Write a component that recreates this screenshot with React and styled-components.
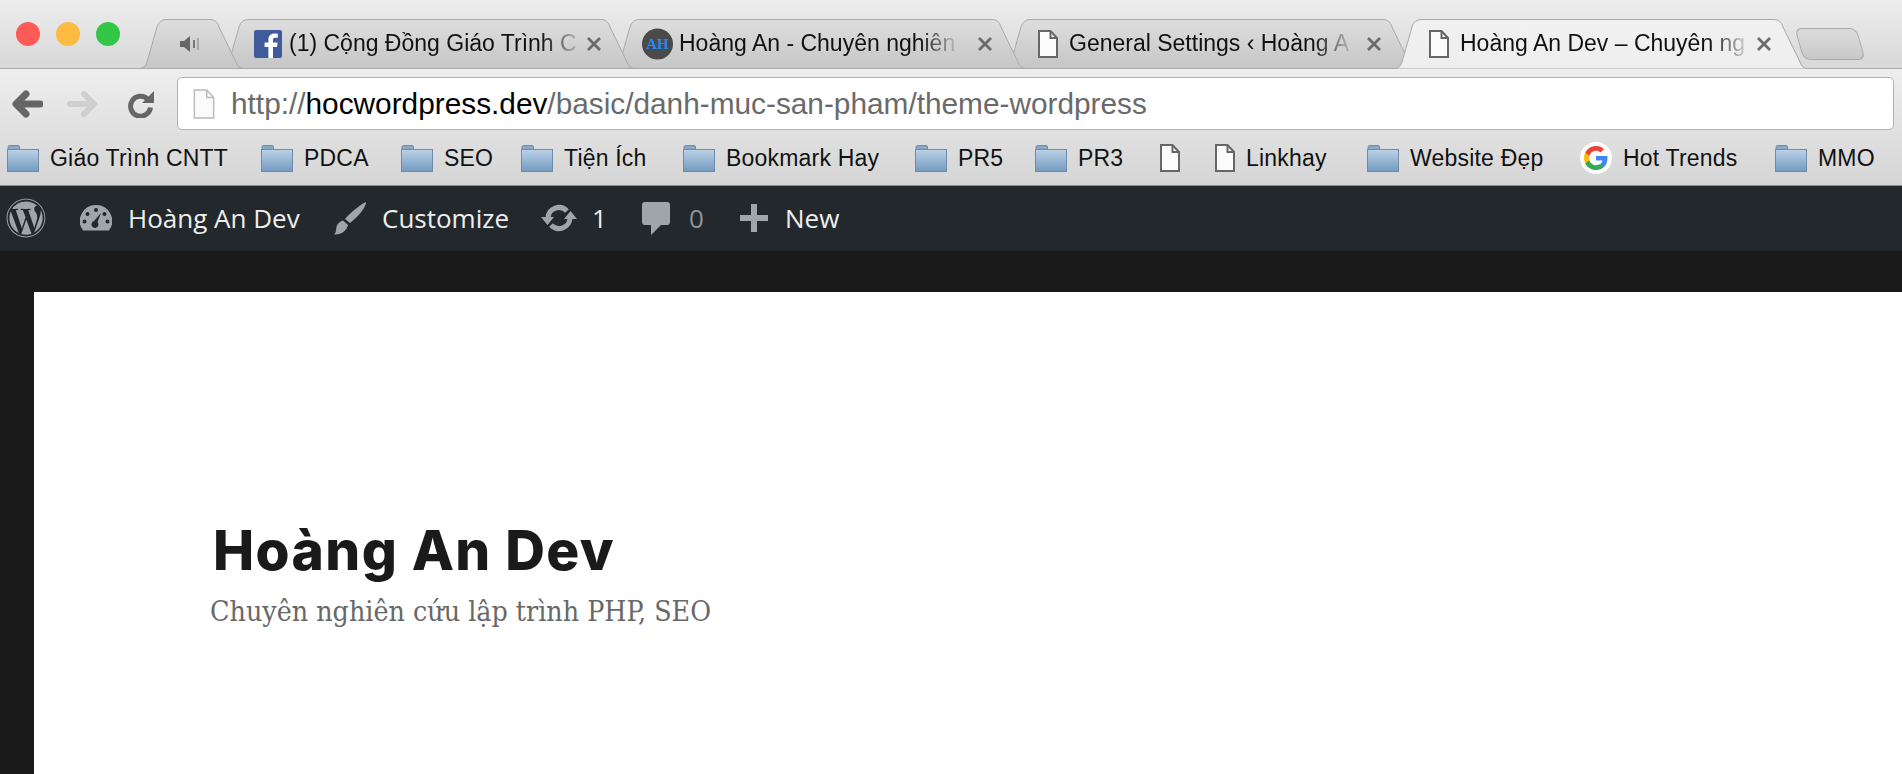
import React from 'react';
import styled, { createGlobalStyle } from 'styled-components';
import { FaWordpress } from 'react-icons/fa';

const GlobalStyle = createGlobalStyle`
  html, body {
    margin: 0;
    height: 100%;
    overflow: hidden;
    background: #1a1a1a;
  }
  #root {
    height: 100%;
  }
`;

const chromeFont = '"Liberation Sans", Arial, sans-serif';

const Page = styled.div`
  display: flex;
  flex-direction: column;
  height: 100%;
`;

const TabStrip = styled.div`
  display: flex;
  align-items: flex-end;
  height: 68px;
  padding-left: 16px;
  background: linear-gradient(#ededed, #d8d8d8);
  border-bottom: 1px solid #a9a9a9;
`;

const Lights = styled.div`
  display: flex;
  gap: 16px;
  align-self: flex-start;
  margin: 22px 19px 0 0;
`;

const Light = styled.span`
  width: 24px;
  height: 24px;
  border-radius: 50%;
  background: ${p => p.$color};
`;

const TabBox = styled.div`
  position: relative;
  z-index: ${p => p.$z};
  display: flex;
  align-items: center;
  flex: none;
  box-sizing: border-box;
  width: ${p => p.$width}px;
  height: 50px;
  margin-bottom: -1px;
  margin-left: ${p => (p.$first ? 0 : -23)}px;
  padding: 0 ${p => p.$right}px 1px ${p => p.$left}px;
  font: 23px ${chromeFont};
  color: #111;
`;

const TabShape = styled.svg`
  position: absolute;
  top: 0;
  left: 0;
  z-index: -1;
`;

const TabIcon = styled.span`
  display: flex;
  flex: none;
  margin-right: ${p => p.$gap}px;
`;

const TabTitle = styled.span`
  white-space: nowrap;
  -webkit-mask-image: linear-gradient(to right, #000 calc(100% - 36px), rgba(0, 0, 0, 0.15) 100%);
  mask-image: linear-gradient(to right, #000 calc(100% - 36px), rgba(0, 0, 0, 0.15) 100%);
`;

const CloseMark = styled.svg`
  flex: none;
  margin-left: auto;
`;

const NewTab = styled.div`
  flex: none;
  width: 62px;
  height: 32px;
  margin: 0 0 8px -9px;
  border: 1px solid #a9a9a9;
  border-radius: 7px;
  box-sizing: border-box;
  background: linear-gradient(#dcdcdc, #c8c8c8);
  transform: skewX(16deg);
`;

const Chrome = styled.div`
  background: linear-gradient(#eeeeee, #d5d5d5);
  border-bottom: 1px solid #8b8b8b;
`;

const Toolbar = styled.div`
  display: flex;
  align-items: center;
  box-sizing: border-box;
  height: 61px;
  padding: 8px 8px 0 11px;
`;

const NavIcon = styled.svg`
  flex: none;
  margin-right: ${p => p.$after}px;
`;

const Address = styled.div`
  flex: 1;
  display: flex;
  align-items: center;
  box-sizing: border-box;
  height: 53px;
  padding-left: 15px;
  background: #fff;
  border: 1px solid #b2b2b2;
  border-radius: 5px;
`;

const Url = styled.div`
  margin-left: 16px;
  font: 29.8px ${chromeFont};
  color: #6a6a6a;
  white-space: nowrap;
`;

const UrlHost = styled.span`
  color: #000;
`;

const Bookmarks = styled.div`
  display: flex;
  align-items: center;
  box-sizing: border-box;
  height: 55px;
  padding: 1px 0 0 7px;
`;

const Bookmark = styled.div`
  display: flex;
  align-items: center;
  flex: none;
  gap: 11px;
  width: ${p => p.$width}px;
  font: 23px ${chromeFont};
  letter-spacing: 0.2px;
  color: #111;
  white-space: nowrap;
`;

const AdminBar = styled.div`
  display: flex;
  align-items: center;
  flex: none;
  box-sizing: border-box;
  height: 65px;
  padding-bottom: 1px;
  background: #23282d;
  font: 26px "Open Sans", sans-serif;
  color: #eeeeee;
`;

const AdminItem = styled.div`
  display: flex;
  align-items: center;
  flex: none;
  width: ${p => p.$width}px;
  gap: ${p => p.$gap}px;
  color: ${p => p.$color || 'inherit'};
`;

const Main = styled.main`
  flex: 1;
  display: flex;
  padding: 41px 0 0 34px;
  background: #1a1a1a;
  min-height: 0;
`;

const Sheet = styled.div`
  flex: 1;
  background: #fff;
  padding: 225px 0 0 179px;
`;

const SiteTitle = styled.h1`
  margin: 0;
  font: 800 55px/66px Inter, sans-serif;
  letter-spacing: 1.4px;
  color: #1a1a1a;
`;

const Tagline = styled.p`
  margin: 10px 0 0 -3px;
  font: 28.3px/38px "DejaVu Serif", serif;
  font-stretch: condensed;
  color: #686868;
`;

const Gauge = styled.svg`
  flex: none;
`;

const tabPath = (w, closed) =>
  `M0.5 49.5 Q6 49.5 8 43 L18 8 Q20 0.5 28 0.5 H${w - 34} Q${w - 27} 0.5 ${w - 25} 8 L${w - 8} 43 Q${w - 6} 49.5 ${w - 0.5} 49.5${closed ? ' Z' : ''}`;

const Tab = ({ width, left, right, z, first, active, gap = 8, icon, title }) => (
  <TabBox $width={width} $left={left} $right={right} $z={z} $first={first}>
    <TabShape width={width} height={50}>
      <defs>
        <linearGradient id={`tab${z}`} x1="0" y1="0" x2="0" y2="1">
          <stop offset="0" stopColor={active ? '#f1f1f1' : '#dedede'} />
          <stop offset="1" stopColor={active ? '#eeeeee' : '#c6c6c6'} />
        </linearGradient>
      </defs>
      <path d={tabPath(width, !active)} fill={`url(#tab${z})`} stroke="#a9a9a9" />
    </TabShape>
    <TabIcon $gap={gap}>{icon}</TabIcon>
    {title && <TabTitle>{title}</TabTitle>}
    {title && (
      <CloseMark width="16" height="16" viewBox="0 0 16 16">
        <path d="M2 2 L14 14 M14 2 L2 14" stroke="#6b6b6b" strokeWidth="2.8" />
      </CloseMark>
    )}
  </TabBox>
);

const SpeakerIcon = () => (
  <svg width="20" height="16" viewBox="0 0 20 16">
    <path d="M0 5 H4 L10 0 V16 L4 11 H0 Z" fill="#666" />
    <rect x="13" y="4" width="2" height="8" fill="#777" />
    <rect x="17" y="2" width="2" height="12" fill="#aaa" />
  </svg>
);

const FacebookIcon = () => (
  <svg width="28" height="28" viewBox="0 0 28 28">
    <rect width="28" height="28" rx="2" fill="#3f5b9b" />
    <path d="M19 28 V17 H23 L23.6 12.5 H19 V10 C19 8.6 19.5 7.8 21.2 7.8 H23.8 V3.8 C23 3.7 21.8 3.6 20.4 3.6 C16.8 3.6 14.4 5.8 14.4 9.5 V12.5 H10.6 V17 H14.4 V28 Z" fill="#fff" />
  </svg>
);

const AuthorIcon = () => (
  <svg width="31" height="32" viewBox="0 0 31 32">
    <circle cx="15.5" cy="16" r="15.5" fill="#4a4a4a" />
    <text x="15.5" y="21" textAnchor="middle" fontFamily="Liberation Serif, serif" fontWeight="700" fontSize="15" fill="#1c8cf0">AH</text>
  </svg>
);

const PageIcon = ({ color = '#666', width = 20, height = 28, strokeWidth = 2 }) => (
  <svg width={width} height={height} viewBox="0 0 20 28">
    <path d="M1 1 H12.5 L19 8 V27 H1 Z" fill="#fbfbfb" stroke={color} strokeWidth={strokeWidth} />
    <path d="M12.5 1 V8 H19" fill="none" stroke={color} strokeWidth={strokeWidth} />
  </svg>
);

const FolderIcon = () => (
  <svg width="32" height="27" viewBox="0 0 32 27">
    <defs>
      <linearGradient id="folder" x1="0" y1="0" x2="0" y2="1">
        <stop offset="0" stopColor="#bcd2e8" />
        <stop offset="1" stopColor="#7399c0" />
      </linearGradient>
    </defs>
    <path d="M1 5 V2 Q1 0.5 2.5 0.5 H11 Q12.5 0.5 12.5 2 V5 Z" fill="#8aa9c9" stroke="#6c8cad" />
    <rect x="0.5" y="4.5" width="31" height="22" fill="url(#folder)" stroke="#6d8cab" />
  </svg>
);

const GoogleIcon = () => (
  <svg width="32" height="32" viewBox="0 0 32 32">
    <circle cx="16" cy="16" r="16" fill="#fff" />
    <g transform="translate(4 4)">
      <path d="M23.5 12.3c0-.8-.1-1.6-.2-2.3H12v4.5h6.5c-.3 1.5-1.1 2.8-2.4 3.6v3h3.9c2.3-2.1 3.5-5.2 3.5-8.8z" fill="#4285f4" />
      <path d="M12 24c3.2 0 6-1.1 8-2.9l-3.9-3c-1.1.7-2.5 1.2-4.1 1.2-3.1 0-5.8-2.1-6.7-5H1.3v3.1C3.3 21.3 7.3 24 12 24z" fill="#34a853" />
      <path d="M5.3 14.3c-.5-1.5-.5-3.100 0-4.600V6.600H1.300c-1.700 3.300-1.700 7.500 0 10.800z" fill="#fbbc05" />
      <path d="M12 4.800c1.800 0 3.300.6 4.600 1.800l3.400-3.400C18 1.200 15.200 0 12 0 7.300 0 3.300 2.700 1.300 6.600l4 3.100c.9-2.800 3.600-4.900 6.700-4.900z" fill="#ea4335" />
    </g>
  </svg>
);

const DashboardIcon = () => (
  <Gauge width="32" height="26" viewBox="0 0 32 26">
    <path d="M16 0 A16 16 0 0 1 29 25.500 H3 A16 16 0 0 1 16 0 Z" fill="#a0a5aa" />
    <circle cx="16" cy="5" r="2" fill="#23282d" />
    <circle cx="7.500" cy="9" r="2" fill="#23282d" />
    <circle cx="24.500" cy="9" r="2" fill="#23282d" />
    <circle cx="4.500" cy="16.500" r="2" fill="#23282d" />
    <circle cx="27.500" cy="16.500" r="2" fill="#23282d" />
    <path d="M21 8 L17.500 17 A3.500 3.500 0 1 1 14 16 Z" fill="#23282d" />
  </Gauge>
);

const BrushIcon = () => (
  <Gauge width="34" height="33" viewBox="0 0 34 33">
    <path d="M33 0 C33.500 4 27 13 17 21 L12 17 C18 10 28 2 33 0 Z" fill="#a0a5aa" />
    <path d="M10 18.500 L15 23 C14 28 9 33 1 32.500 C4 30 2.500 27 4 23.500 C5 21 7.500 19.500 10 18.500 Z" fill="#a0a5aa" />
  </Gauge>
);

const UpdateIcon = () => (
  <Gauge width="36" height="28" viewBox="0 0 36 28" fill="none">
    <path d="M7 14 A11 11 0 0 1 26 7" stroke="#a0a5aa" strokeWidth="5" />
    <path d="M29 14 A11 11 0 0 1 10 21" stroke="#a0a5aa" strokeWidth="5" />
    <path d="M0 13 H13 L6.500 21 Z M23 15 H36 L29.500 7 Z" fill="#a0a5aa" />
  </Gauge>
);

const CommentIcon = () => (
  <Gauge width="28" height="33" viewBox="0 0 28 33">
    <path d="M3 0 H25 Q28 0 28 3 V20 Q28 23 25 23 H19 L9 33 V23 H3 Q0 23 0 20 V3 Q0 0 3 0 Z" fill="#a0a5aa" />
  </Gauge>
);

const PlusIcon = () => (
  <Gauge width="28" height="28" viewBox="0 0 28 28">
    <path d="M11 0 H17 V11 H28 V17 H17 V28 H11 V17 H0 V11 H11 Z" fill="#a0a5aa" />
  </Gauge>
);

const bookmarks = [
  { label: 'Giáo Trình CNTT', width: 254 },
  { label: 'PDCA', width: 140 },
  { label: 'SEO', width: 120 },
  { label: 'Tiện Ích', width: 162 },
  { label: 'Bookmark Hay', width: 232 },
  { label: 'PR5', width: 120 },
  { label: 'PR3', width: 125 },
  { page: true, width: 55 },
  { page: true, label: 'Linkhay', width: 152 },
  { label: 'Website Đẹp', width: 213 },
  { google: true, label: 'Hot Trends', width: 195 },
  { label: 'MMO', width: 100 },
];

export default function App() {
  return (
    <Page>
      <GlobalStyle />
      <TabStrip>
        <Lights>
          <Light $color="#fc5b57" />
          <Light $color="#fdbc40" />
          <Light $color="#33c748" />
        </Lights>
        <Tab first width={105} left={41} right={0} z={5} icon={<SpeakerIcon />} />
        <Tab width={414} left={33} right={33} z={4} gap={7} icon={<FacebookIcon />} title="(1) Cộng Đồng Giáo Trình C" />
        <Tab width={414} left={30} right={33} z={3} gap={6} icon={<AuthorIcon />} title="Hoàng An - Chuyên nghiên" />
        <Tab width={414} left={35} right={35} z={2} gap={11} icon={<PageIcon />} title="General Settings ‹ Hoàng A" />
        <Tab active width={414} left={35} right={36} z={6} gap={11} icon={<PageIcon />} title="Hoàng An Dev – Chuyên ng" />
        <NewTab />
      </TabStrip>

      <Chrome>
        <Toolbar>
          <NavIcon $after={24} width="32" height="28" viewBox="0 0 32 28" fill="none">
            <path d="M29 14 H6 M15 4 L5 14 L15 24" stroke="#666" strokeWidth="7" strokeLinecap="round" strokeLinejoin="round" />
          </NavIcon>
          <NavIcon $after={28} width="32" height="28" viewBox="0 0 32 28" fill="none">
            <path d="M3 14 H26 M17 4 L27 14 L17 24" stroke="#cfcfcf" strokeWidth="6" strokeLinecap="round" strokeLinejoin="round" />
          </NavIcon>
          <NavIcon $after={22} width="28" height="28" viewBox="0 0 28 28" fill="none">
            <path d="M20.500 9 A10 10 0 1 0 23.500 17.500" stroke="#666" strokeWidth="5" />
            <path d="M27 1 V13 H15 Z" fill="#666" />
          </NavIcon>
          <Address>
            <PageIcon color="#bbb" width={22} height={30} strokeWidth={1.4} />
            <Url>
              http://<UrlHost>hocwordpress.dev</UrlHost>/basic/danh-muc-san-pham/theme-wordpress
            </Url>
          </Address>
        </Toolbar>

        <Bookmarks>
          {bookmarks.map((b, i) => (
            <Bookmark key={i} $width={b.width}>
              {b.google ? <GoogleIcon /> : b.page ? <PageIcon /> : <FolderIcon />}
              {b.label && <span>{b.label}</span>}
            </Bookmark>
          ))}
        </Bookmarks>
      </Chrome>

      <AdminBar>
        <AdminItem $width={80}>
          <FaWordpress size={40} color="#a0a5aa" style={{ marginLeft: 6 }} />
        </AdminItem>
        <AdminItem $width={253} $gap={16}>
          <DashboardIcon />
          Hoàng An Dev
        </AdminItem>
        <AdminItem $width={208} $gap={15}>
          <BrushIcon />
          Customize
        </AdminItem>
        <AdminItem $width={101} $gap={15}>
          <UpdateIcon />
          1
        </AdminItem>
        <AdminItem $width={98} $gap={19} $color="#8f9499">
          <CommentIcon />
          0
        </AdminItem>
        <AdminItem $gap={17}>
          <PlusIcon />
          New
        </AdminItem>
      </AdminBar>

      <Main>
        <Sheet>
          <SiteTitle>Hoàng An Dev</SiteTitle>
          <Tagline>Chuyên nghiên cứu lập trình PHP, SEO</Tagline>
        </Sheet>
      </Main>
    </Page>
  );
}
